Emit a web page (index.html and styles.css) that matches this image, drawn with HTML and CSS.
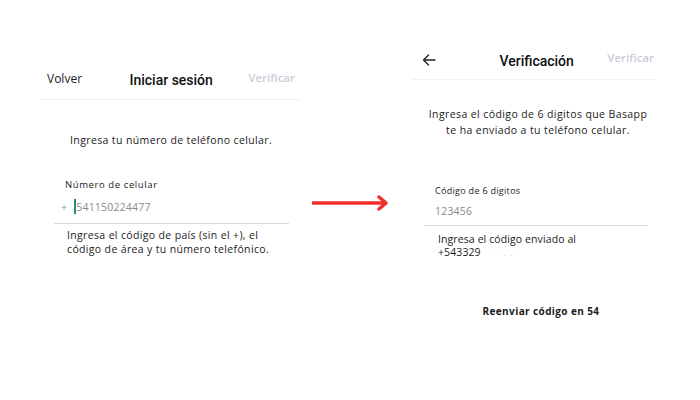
FILE: index.html
```html
<!DOCTYPE html>
<html lang="es">
<head>
    <meta charset="UTF-8">
    <title>Iniciar sesión / Verificación</title>
    <link rel="stylesheet" href="styles.css">
</head>
<body>
    <div class="stage">
        <!-- Login screen -->
        <div class="screen login">
            <div class="topbar">
                <span class="back">Volver</span>
                <span class="title">Iniciar sesión</span>
                <span class="action">Verificar</span>
            </div>
            <p class="intro">Ingresa tu número de teléfono celular.</p>
            <div class="field">
                <label>Número de celular</label>
                <div class="input"><span class="plus">+</span><span class="caret"></span><span class="value">541150224477</span></div>
            </div>
            <p class="help">Ingresa el código de país (sin el +), el<br>código de área y tu número telefónico.</p>
        </div>

        <!-- Arrow -->
        <div class="arrow">
            <svg width="80" height="16" viewBox="0 0 80 16">
                <line x1="0" y1="8" x2="74" y2="8" stroke="#f2302a" stroke-width="3.5"/>
                <polyline points="67,2 74,8 67,14" fill="none" stroke="#f2302a" stroke-width="3.5" stroke-linecap="round" stroke-linejoin="round"/>
            </svg>
        </div>

        <!-- Verification screen -->
        <div class="screen verify">
            <div class="topbar">
                <span class="back">
                    <svg width="14" height="12" viewBox="0 0 14 12"><path d="M13 6H1.5M6.5 1L1.5 6l5 5" fill="none" stroke="#222" stroke-width="1.4" stroke-linecap="round" stroke-linejoin="round"/></svg>
                </span>
                <span class="title">Verificación</span>
                <span class="action">Verificar</span>
            </div>
            <p class="intro">Ingresa el código de 6 digitos que Basapp<br>te ha enviado a tu teléfono celular.</p>
            <div class="field">
                <label>Código de 6 digitos</label>
                <div class="input"><span class="value">123456</span></div>
            </div>
            <p class="help">Ingresa el código enviado al<br>+543329 <span class="dots">. . . . .</span></p>
            <p class="resend">Reenviar código en 54</p>
        </div>
    </div>
</body>
</html>
```

FILE: styles.css
```css
* {
    box-sizing: border-box;
}
body {
    margin: 0;
    background: #fff;
    font-family: 'Open Sans', sans-serif;
    color: #1c1c1c;
}
.stage {
    display: flex;
    align-items: flex-start;
    width: 700px;
    height: 400px;
}
.screen {
    display: flex;
    flex-direction: column;
}
.login {
    width: 260px;
    margin-left: 40px;
    margin-top: 70px;
}
.verify {
    width: 244px;
    margin-left: 10px;
    margin-top: 50px;
}
.arrow {
    width: 102px;
    margin-top: 194px;
    padding-left: 12px;
}
.topbar {
    display: flex;
    justify-content: space-between;
    align-items: flex-start;
    border-bottom: 1px solid #f2f2f2;
}
.login .topbar {
    padding: 0 5px 0 7px;
    height: 30px;
}
.verify .topbar {
    padding: 0 2px 0 10px;
    height: 30px;
}
.back {
    font-size: 12px;
}
.title {
    font-family: 'Roboto', sans-serif;
    font-size: 14px;
    font-weight: 500;
    color: #111;
}
.login .title {
    margin-top: 2px;
    margin-left: 12px;
}
.verify .back {
    margin-top: 3px;
}
.verify .title {
    margin-top: 3px;
    margin-left: 30px;
}
.action {
    font-size: 11.5px;
    font-weight: 600;
    color: #c9cdd9;
}
.intro {
    margin: 0;
    line-height: 16px;
}
.login .intro {
    font-size: 10.5px;
    letter-spacing: 0.38px;
    margin: 32px 0 0 30px;
}
.verify .intro {
    font-size: 10.5px;
    letter-spacing: 0.4px;
    margin: 26px 0 0 0;
    padding-left: 8px;
    text-align: center;
}
.field {
    display: flex;
    flex-direction: column;
    border-bottom: 1px solid #d8d8d8;
}
.login .field {
    margin: 30px 11px 0 14px;
    padding-left: 11px;
    padding-bottom: 9px;
}
.verify .field {
    margin: 46px 8px 0 12px;
    padding-left: 11px;
    padding-bottom: 7px;
}
label {
    font-size: 9px;
    color: #222;
}
.login label {
    font-size: 9.5px;
    letter-spacing: 0.6px;
}
.verify label {
    letter-spacing: 0.3px;
}
.input {
    display: flex;
    align-items: center;
    margin-top: 8px;
    font-size: 10.5px;
    color: #8a8a8a;
    letter-spacing: 0.2px;
}
.verify .input {
    margin-top: 7px;
}
.plus {
    color: #7d9a8f;
    margin-left: -4px;
    margin-right: 7px;
}
.caret {
    width: 2px;
    height: 15px;
    background: #1f8f74;
}
.help {
    font-size: 10.5px;
    margin: 5px 0 0 0;
}
.login .help {
    margin-left: 27px;
    line-height: 13.5px;
    letter-spacing: 0.35px;
}
.verify .help {
    margin-top: 7px;
    margin-left: 26px;
    line-height: 13px;
    letter-spacing: 0.1px;
}
.dots {
    color: #d6d6d6;
    font-size: 8px;
    letter-spacing: 1px;
    margin-left: 8px;
}
.resend {
    font-size: 10px;
    font-weight: 700;
    letter-spacing: 0.4px;
    text-align: center;
    margin: 45px 0 0 14px;
}
```
